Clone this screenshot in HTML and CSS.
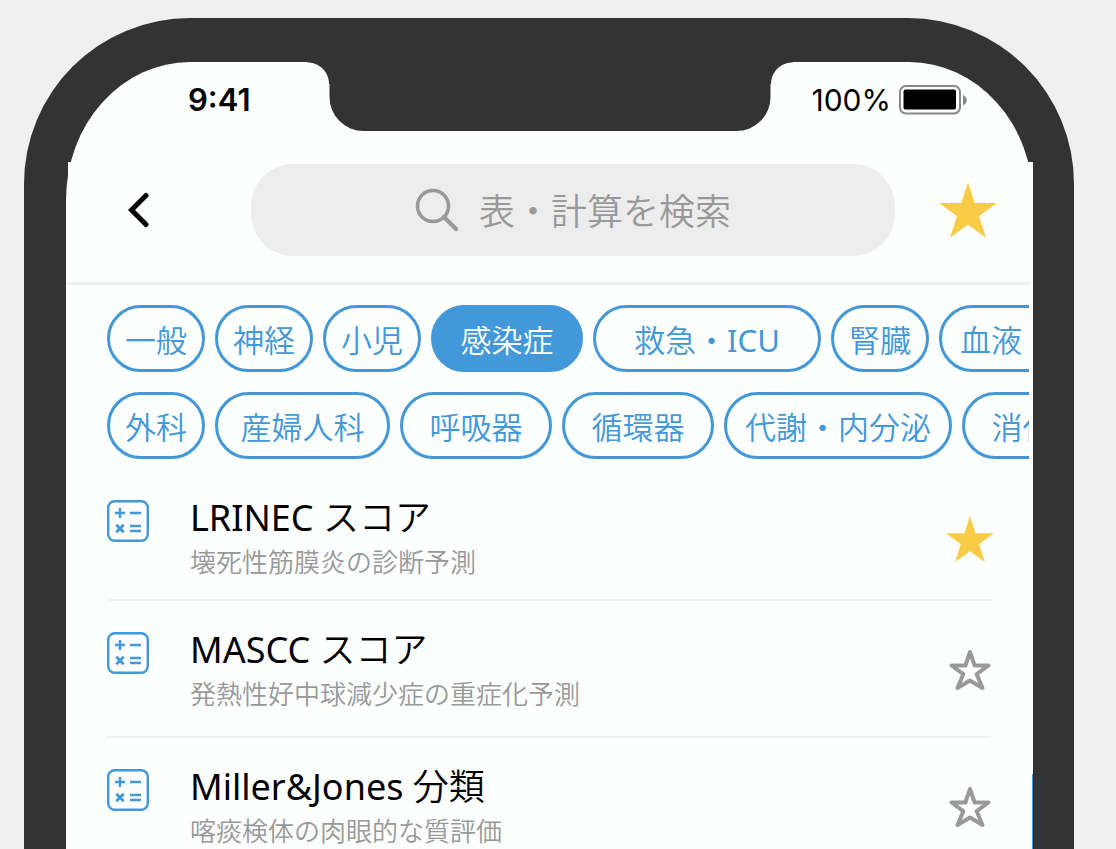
FILE: index.html
```html
<!DOCTYPE html>
<html lang="ja">
<head>
    <meta charset="UTF-8">
    <meta name="viewport" content="width=device-width, initial-scale=1.0">
    <title>感染症 - 表・計算</title>
    <link rel="stylesheet" href="styles.css">
</head>
<body>
    <svg class="symbols" aria-hidden="true">
        <symbol id="star" viewBox="0 0 48 46">
            <path d="M24 0l5.600 17.300H48L33.200 28l5.600 18L24 35.200 9.200 46l5.600-18L0 17.300h18.400z" fill="#f8cc46"/>
        </symbol>
        <symbol id="star-line" viewBox="0 0 42 42">
            <path d="M21 2l4.600 13.500H39.500l-11.800 8.700L33.500 38 21 30.500 8.500 38l5.800-13.800L2.500 15.500h13.900z" fill="none" stroke="#999" stroke-width="4" stroke-linejoin="round"/>
        </symbol>
        <symbol id="calc" viewBox="0 0 42 42">
            <g fill="none" stroke="#4298d8">
                <rect x="1.200" y="1.200" width="39.600" height="39.600" rx="6.500" stroke-width="2.400"/>
                <path d="M8 13h10M13 8v10M23 13h11M23 26h11M23 31h11" stroke-width="2.500"/>
                <path d="M9.300 24.800l7.400 7.400M16.700 24.800l-7.400 7.400" stroke-width="2.800"/>
            </g>
        </symbol>
    </svg>

    <div class="phone">
        <div class="screen">
            <div class="status-bar">
                <span class="time">9:41</span>
                <div class="notch"></div>
                <div class="power">
                    <span>100%</span>
                    <svg width="68" height="30" viewBox="0 0 68 30">
                        <rect x="1" y="1" width="60" height="27.500" rx="6" fill="#fff" stroke="#888" stroke-width="2"/>
                        <rect x="4.500" y="4.500" width="52.500" height="20" rx="2" fill="#000"/>
                        <path d="M64 10c5 2 5 8.500 0 10.500z" fill="#888"/>
                    </svg>
                </div>
            </div>

            <header class="header">
                <button type="button" class="back" aria-label="戻る">
                    <svg width="22" height="36" viewBox="0 0 22 36">
                        <path d="M18 3.500L3.500 18 18 32.500" fill="none" stroke="#000" stroke-width="5" stroke-linecap="round"/>
                    </svg>
                </button>
                <label class="search">
                    <svg width="44" height="44" viewBox="0 0 44 44" fill="none" stroke="#999">
                        <circle cx="18" cy="18" r="15.500" stroke-width="3.600"/>
                        <path d="M29 29l12 12" stroke-width="4.200" stroke-linecap="round"/>
                    </svg>
                    <input type="text" placeholder="表・計算を検索" aria-label="表・計算を検索">
                </label>
                <button type="button" class="favorites" aria-label="お気に入り">
                    <svg width="58" height="56"><use href="#star"/></svg>
                </button>
            </header>

            <nav class="tags">
                <div class="tag-row">
                    <button type="button" class="tag">一般</button>
                    <button type="button" class="tag">神経</button>
                    <button type="button" class="tag">小児</button>
                    <button type="button" class="tag medium active">感染症</button>
                    <button type="button" class="tag wide">救急・ICU</button>
                    <button type="button" class="tag">腎臓</button>
                    <button type="button" class="tag wide start">血液</button>
                </div>
                <div class="tag-row">
                    <button type="button" class="tag">外科</button>
                    <button type="button" class="tag large">産婦人科</button>
                    <button type="button" class="tag medium">呼吸器</button>
                    <button type="button" class="tag medium">循環器</button>
                    <button type="button" class="tag wide">代謝・内分泌</button>
                    <button type="button" class="tag medium">消化器</button>
                </div>
            </nav>

            <ul class="list">
                <li class="item">
                    <svg class="calc" width="42" height="42"><use href="#calc"/></svg>
                    <div class="info">
                        <h2>LRINEC スコア</h2>
                        <p>壊死性筋膜炎の診断予測</p>
                    </div>
                    <button type="button" class="star" aria-label="お気に入りから外す">
                        <svg width="48" height="46"><use href="#star"/></svg>
                    </button>
                </li>
                <li class="item">
                    <svg class="calc" width="42" height="42"><use href="#calc"/></svg>
                    <div class="info">
                        <h2>MASCC スコア</h2>
                        <p>発熱性好中球減少症の重症化予測</p>
                    </div>
                    <button type="button" class="star" aria-label="お気に入りに追加">
                        <svg width="42" height="42"><use href="#star-line"/></svg>
                    </button>
                </li>
                <li class="item">
                    <svg class="calc" width="42" height="42"><use href="#calc"/></svg>
                    <div class="info">
                        <h2>Miller&amp;Jones 分類</h2>
                        <p>喀痰検体の肉眼的な質評価</p>
                    </div>
                    <button type="button" class="star" aria-label="お気に入りに追加">
                        <svg width="42" height="42"><use href="#star-line"/></svg>
                    </button>
                </li>
            </ul>
            <div class="next-page"></div>
        </div>
    </div>
</body>
</html>
```
FILE: styles.css
```css
* {
    box-sizing: border-box;
}
body {
    margin: 0;
    height: 100vh;
    overflow: hidden;
    background: #f0f0f0;
    font-family: "Noto Sans", "Noto Sans CJK JP DemiLight", "Noto Sans CJK JP", sans-serif;
    color: #000;
}
button {
    padding: 0;
    border: none;
    background: none;
    font-family: inherit;
    cursor: pointer;
}
svg {
    display: block;
    flex: none;
}
.symbols {
    position: absolute;
    width: 0;
    height: 0;
}

/* phone body */
.phone {
    margin: 18px 42px 0 24px;
    padding: 44px 41px 0 42px;
    height: 100vh;
    background: #333;
    border-radius: 166px 166px 0 0;
}
.screen {
    position: relative;
    height: 100%;
    background: #fdfefe;
    border-radius: 124px 124px 0 0 / 138px 138px 0 0;
}

/* status bar */
.status-bar {
    display: flex;
    justify-content: space-between;
    height: 100px;
    padding: 20px 66px 0 122px;
    font-family: Inter, sans-serif;
    font-size: 30px;
    line-height: 36px;
}
.time {
    font-size: 31px;
    font-weight: 600;
}
.power {
    display: flex;
    gap: 8px;
    height: 36px;
    align-items: center;
}
.notch {
    position: absolute;
    top: -1px;
    left: 50%;
    width: 441px;
    height: 70px;
    transform: translateX(-50%);
    background: #333;
    border-radius: 0 0 34px 34px;
}
.notch::before,
.notch::after {
    content: "";
    position: absolute;
    top: 0;
    width: 24px;
    height: 23px;
}
.notch::before {
    left: -22px;
    background: radial-gradient(circle at 0 100%, transparent 21px, #333 22px);
}
.notch::after {
    right: -22px;
    background: radial-gradient(circle at 100% 100%, transparent 21px, #333 22px);
}

/* header */
.header {
    display: flex;
    align-items: flex-start;
    margin-left: 2px;
    padding: 2px 36px 0 60px;
    height: 120px;
    background: #fdfefe;
}
.back,
.favorites {
    display: flex;
    align-items: center;
    height: 92px;
}
.search {
    display: flex;
    flex: 1;
    align-items: center;
    justify-content: center;
    gap: 20px;
    height: 92px;
    margin: 0 44px 0 101px;
    background: #ededed;
    border-radius: 42px;
}
.search input {
    width: 252px;
    padding: 4px 0 0;
    border: none;
    outline: none;
    background: none;
    font-family: inherit;
    font-size: 36px;
    line-height: 48px;
}
.search input::placeholder {
    color: #999;
    opacity: 1;
}

/* category tags */
.tags {
    display: flex;
    flex-direction: column;
    gap: 20px;
    margin-right: 4px;
    padding: 20px 0 0 41px;
    border-top: 3px solid #eff1f1;
    overflow: hidden;
}
.tag-row {
    display: flex;
    gap: 10px;
}
.tag {
    flex: none;
    width: 98px;
    height: 67px;
    padding-top: 2px;
    border: 3px solid #4298d8;
    border-radius: 34px;
    color: #4298d8;
    font-size: 31px;
    line-height: 40px;
    white-space: nowrap;
}
.tag.medium {
    width: 152px;
}
.tag.large {
    width: 175px;
}
.tag.wide {
    width: 228px;
}
.tag.start {
    padding-left: 18px;
    text-align: left;
}
.tag.active {
    background: #4298d8;
    color: #fff;
}

/* score list */
.list {
    list-style: none;
    margin: 24px 42px 0 41px;
    padding: 0;
}
.item {
    display: flex;
    align-items: center;
    padding: 31px 0 26px;
    border-bottom: 2px solid #eff1f1;
}
.item:first-child {
    padding: 17px 0 21px;
}
.calc {
    align-self: flex-start;
}
.info {
    flex: 1;
    margin-left: 41px;
}
.info h2 {
    margin: 0;
    font-size: 36px;
    font-weight: 400;
    line-height: 36px;
}
.info p {
    margin: 10px 0 0;
    color: #999;
    font-size: 26px;
    line-height: 32px;
}
.star {
    display: flex;
    justify-content: center;
    width: 48px;
    margin-right: -3px;
}

/* edge of the next page */
.next-page {
    position: absolute;
    top: 712px;
    right: 0;
    bottom: 0;
    width: 1px;
    background: #4298d8;
}
```
